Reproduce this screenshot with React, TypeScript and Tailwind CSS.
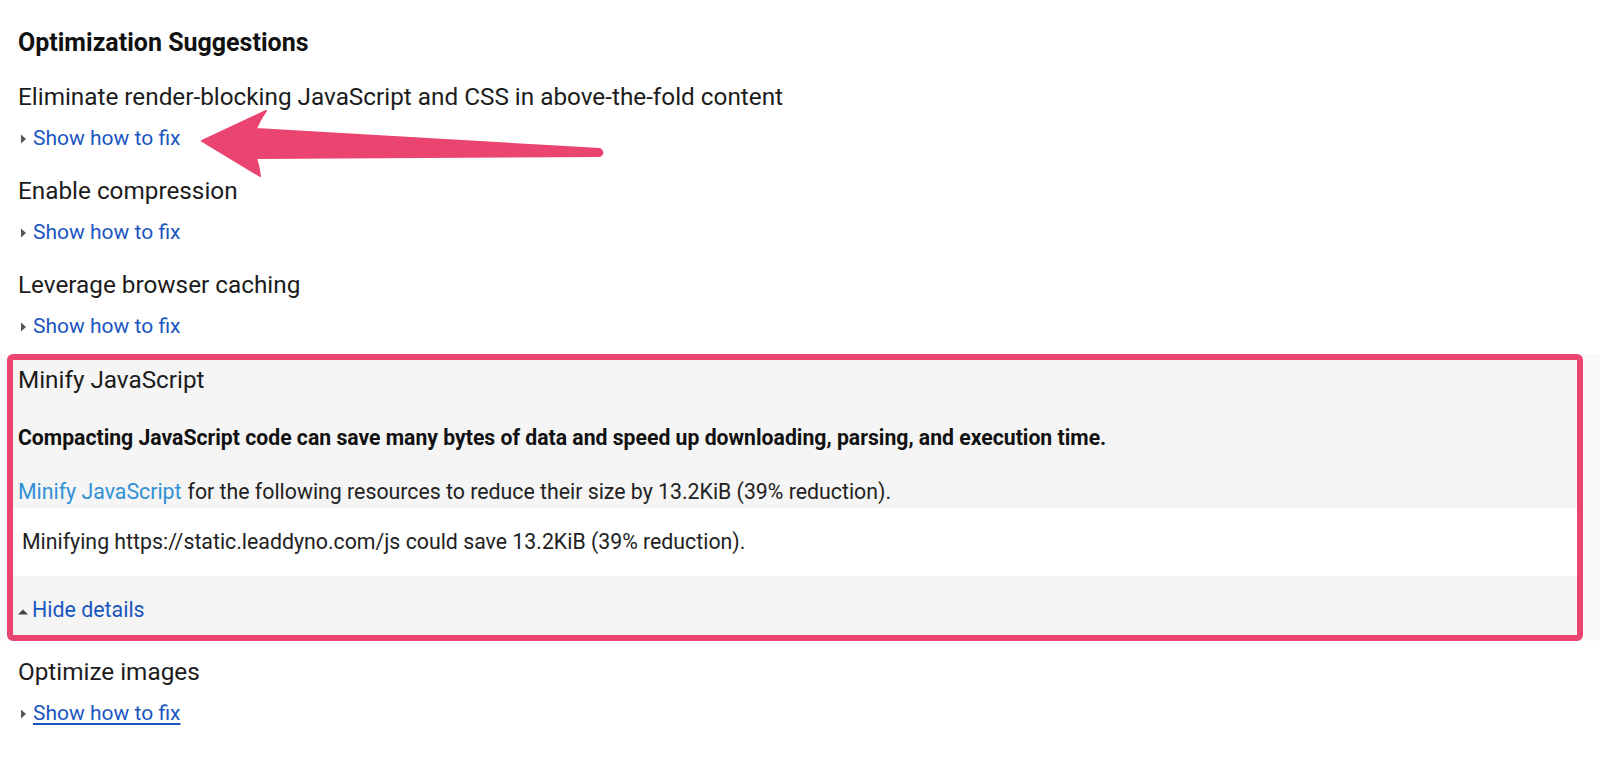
const items = [
  "Eliminate render-blocking JavaScript and CSS in above-the-fold content",
  "Enable compression",
  "Leverage browser caching",
];

const RightTriangle = () => (
  <svg width="5" height="10" viewBox="0 0 5 10" className="mr-[7px] ml-[3px]">
    <path d="M0 0.5 L5 5 L0 9.5 Z" fill="#555" />
  </svg>
);

const UpTriangle = () => (
  <svg width="10" height="6" viewBox="0 0 10 6" className="mr-[4px] mt-[4px] ml-[1px]">
    <path d="M0 5.5 L5 0.5 L10 5.5 Z" fill="#444" />
  </svg>
);

const ShowFix = ({ underline = false }: { underline?: boolean }) => (
  <div className="flex items-center h-[40px] pt-[3px]">
    <RightTriangle />
    <a
      href="#"
      className={
        "text-[21px] text-[#1a55c0] " + (underline ? "underline underline-offset-[3px]" : "")
      }
    >
      Show how to fix
    </a>
  </div>
);

const Item = ({ title, underline = false }: { title: string; underline?: boolean }) => (
  <div className="flex flex-col">
    <div className="h-[40px] flex items-center text-[24.3px] text-[#1c1c1c]">{title}</div>
    <ShowFix underline={underline} />
  </div>
);

const Arrow = () => (
  <svg
    className="absolute left-0 top-0 pointer-events-none"
    width="620"
    height="190"
    viewBox="0 0 620 190"
  >
    <path
      d="M202 141 L266 111 Q259 121 256 129 L600 149 Q605 152.5 600 156 L256 158 Q259 167 260 176 Z"
      fill="#ea4570"
      stroke="#ea4570"
      strokeWidth="2"
      strokeLinejoin="round"
    />
  </svg>
);

export default function App() {
  return (
    <div
      className="relative w-[1600px] h-[775px] bg-white overflow-hidden text-[#1c1c1c]"
      style={{ fontFamily: "Roboto, 'Liberation Sans', sans-serif" }}
    >
      <div className="flex flex-col pt-[23px]">
        <h2 className="px-[18px] h-[40px] flex items-center text-[25px] font-bold text-[#111]">
          Optimization Suggestions
        </h2>
        <div className="px-[18px] mt-[14px] flex flex-col gap-[14px]">
          {items.map((t) => (
            <Item key={t} title={t} />
          ))}
        </div>

        <div className="relative mt-[9px] h-[287px] bg-[#fafafa] flex flex-col">
          <div className="ml-[13px] mr-[17px] h-full pt-[6px] bg-[#f5f5f5] flex flex-col">
            <div className="px-[5px] h-[40px] flex items-center text-[24.3px] text-[#1c1c1c]">
              Minify JavaScript
            </div>
            <div className="px-[5px] mt-[18px] h-[40px] flex items-center text-[21.2px] font-bold text-[#111]">
              Compacting JavaScript code can save many bytes of data and speed up downloading,
              parsing, and execution time.
            </div>
            <div className="px-[5px] mt-[18px] h-[32px] flex items-center text-[21.3px] text-[#222]">
              <a href="#" className="text-[#3090d5] mr-[6px]">
                Minify JavaScript
              </a>
              for the following resources to reduce their size by 13.2KiB (39% reduction).
            </div>
            <div className="bg-white h-[68px] flex items-center px-[9px] mr-[4px] text-[21.3px] text-[#222]">
              Minifying https://static.leaddyno.com/js could save 13.2KiB (39% reduction).
            </div>
            <div className="mt-[14px] h-[40px] flex items-center pl-[4px]">
              <UpTriangle />
              <a href="#" className="text-[21.4px] text-[#1a55c0]">
                Hide details
              </a>
            </div>
          </div>
          <div className="absolute left-[7px] top-0 w-[1576px] h-[287px] border-[6px] border-[#ea4570] rounded-[6px] pointer-events-none" />
        </div>

        <div className="px-[18px] mt-[11px]">
          <Item title="Optimize images" underline />
        </div>
      </div>
      <Arrow />
    </div>
  );
}
